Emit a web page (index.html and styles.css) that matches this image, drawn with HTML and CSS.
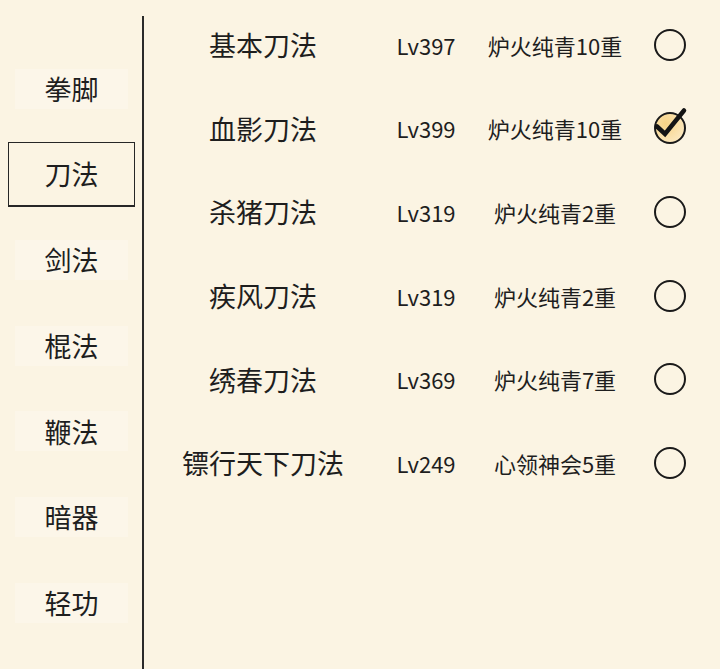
FILE: index.html
```html
<!DOCTYPE html>
<html>
<head>
  <meta charset="utf-8">
  <title>武学</title>
  <link rel="stylesheet" href="styles.css">
</head>
<body>
  <div class="page">
    <div class="sidebar">
      <div class="tab"><span>拳脚</span></div>
      <div class="tab active"><span>刀法</span></div>
      <div class="tab"><span>剑法</span></div>
      <div class="tab"><span>棍法</span></div>
      <div class="tab"><span>鞭法</span></div>
      <div class="tab"><span>暗器</span></div>
      <div class="tab"><span>轻功</span></div>
    </div>

    <div class="divider"></div>

    <div class="skills">
      <div class="row">
        <span class="name">基本刀法</span>
        <span class="lv">Lv397</span>
        <span class="stage">炉火纯青10重</span>
        <span class="pick"><svg viewBox="-4 -4 40 40"><circle cx="16" cy="16" r="15" class="ring"/></svg></span>
      </div>
      <div class="row">
        <span class="name">血影刀法</span>
        <span class="lv">Lv399</span>
        <span class="stage">炉火纯青10重</span>
        <span class="pick"><svg viewBox="-4 -4 40 40">
          <defs>
            <radialGradient id="glow" cx="0.35" cy="0.35" r="0.7">
              <stop offset="0" stop-color="#f7d386"/>
              <stop offset="1" stop-color="#fbe8bf"/>
            </radialGradient>
          </defs>
          <circle cx="16" cy="16" r="15" fill="url(#glow)" class="ring"/>
          <path d="M3 14.5 L11 22 L30 -1.5" class="tick"/>
        </svg></span>
      </div>
      <div class="row">
        <span class="name">杀猪刀法</span>
        <span class="lv">Lv319</span>
        <span class="stage">炉火纯青2重</span>
        <span class="pick"><svg viewBox="-4 -4 40 40"><circle cx="16" cy="16" r="15" class="ring"/></svg></span>
      </div>
      <div class="row">
        <span class="name">疾风刀法</span>
        <span class="lv">Lv319</span>
        <span class="stage">炉火纯青2重</span>
        <span class="pick"><svg viewBox="-4 -4 40 40"><circle cx="16" cy="16" r="15" class="ring"/></svg></span>
      </div>
      <div class="row">
        <span class="name">绣春刀法</span>
        <span class="lv">Lv369</span>
        <span class="stage">炉火纯青7重</span>
        <span class="pick"><svg viewBox="-4 -4 40 40"><circle cx="16" cy="16" r="15" class="ring"/></svg></span>
      </div>
      <div class="row">
        <span class="name">镖行天下刀法</span>
        <span class="lv">Lv249</span>
        <span class="stage">心领神会5重</span>
        <span class="pick"><svg viewBox="-4 -4 40 40"><circle cx="16" cy="16" r="15" class="ring"/></svg></span>
      </div>
    </div>
  </div>
</body>
</html>
```

FILE: styles.css
```css
body {
  margin: 0;
  background-color: #fbf4e3;
  color: #1e1e1e;
  font-family: "Noto Sans CJK SC", "Noto Sans", sans-serif;
}

.page {
  display: flex;
  height: 669px;
  overflow: hidden;
}

.sidebar {
  width: 142px;
  flex-shrink: 0;
  display: flex;
  flex-direction: column;
  gap: 20.7px;
  padding-top: 56px;
  box-sizing: border-box;
}

.tab {
  width: 127px;
  height: 65px;
  margin-left: 8px;
  box-sizing: border-box;
  display: flex;
  align-items: center;
  justify-content: center;
  font-size: 27px;
  line-height: 1;
}

.tab span {
  width: 113px;
  height: 40px;
  display: flex;
  align-items: center;
  justify-content: center;
  background-color: #fcf6e9;
}

.tab.active {
  border: 1.5px solid #262626;
  border-bottom-width: 2.5px;
}

.tab.active span {
  background: none;
}

.divider {
  width: 2px;
  margin-top: 16px;
  background-color: #2a2a2a;
  flex-shrink: 0;
}

.skills {
  flex: 1;
  padding-top: 3px;
}

.row {
  display: grid;
  grid-template-columns: 238px 88px 170px 60px;
  height: 83.6px;
  align-items: center;
  text-align: center;
  line-height: 1;
}

.name {
  font-size: 27px;
}

.lv,
.stage {
  font-size: 22px;
}

.pick {
  display: flex;
  justify-content: center;
}

.pick svg {
  width: 40px;
  height: 40px;
  overflow: visible;
}

.ring {
  fill: none;
  stroke: #1a1a1a;
  stroke-width: 2;
}

.ring[fill] {
  fill: url(#glow);
}

.tick {
  fill: none;
  stroke: #141414;
  stroke-width: 4.5;
  stroke-linecap: round;
  stroke-linejoin: miter;
}
```
